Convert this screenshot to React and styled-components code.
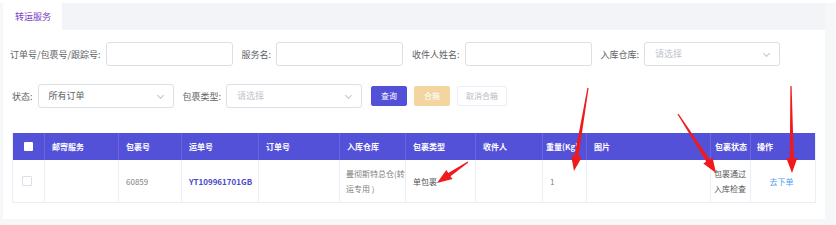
import React from "react"
import styled, { createGlobalStyle } from "styled-components"

const GlobalStyle = createGlobalStyle`
  html, body {
    margin: 0;
    padding: 0;
    background: #f6f7f9;
    font-family: "Noto Sans CJK SC", "Noto Sans", sans-serif;
  }
`

const columns = [
  { key: "check", title: "", width: 31 },
  { key: "service", title: "邮寄服务", width: 74 },
  { key: "pkg", title: "包裹号", width: 63 },
  { key: "waybill", title: "运单号", width: 77 },
  { key: "order", title: "订单号", width: 81 },
  { key: "warehouse", title: "入库仓库", width: 66 },
  { key: "type", title: "包裹类型", width: 70 },
  { key: "receiver", title: "收件人", width: 67 },
  { key: "weight", title: "重量(Kg)", width: 44, pad: 3 },
  { key: "photo", title: "图片", width: 124 },
  { key: "status", title: "包裹状态", width: 40, pad: 4 },
  { key: "action", title: "操作", width: 65, pad: 6 },
]

const gridTemplate = columns.map(c => c.width + "px").join(" ")

// red annotation arrows drawn on top of the screenshot
const arrows = [
  { x1: 468, y1: 162, x2: 437, y2: 183 },
  { x1: 588, y1: 88, x2: 574, y2: 171 },
  { x1: 678, y1: 114, x2: 716, y2: 173 },
  { x1: 791, y1: 86, x2: 792, y2: 173 },
]

const arrowPoints = ({ x1, y1, x2, y2 }) => {
  const dx = x2 - x1, dy = y2 - y1
  const len = Math.sqrt(dx * dx + dy * dy)
  const ux = dx / len, uy = dy / len
  const nx = -uy, ny = ux
  const head = 15, hw = 5.5, sw0 = 0.6, sw1 = 2
  const bx = x2 - ux * head, by = y2 - uy * head
  const p = (x, y) => `${x.toFixed(1)},${y.toFixed(1)}`
  return [
    p(x1 + nx * sw0, y1 + ny * sw0),
    p(bx + nx * sw1, by + ny * sw1),
    p(bx + nx * hw, by + ny * hw),
    p(x2, y2),
    p(bx - nx * hw, by - ny * hw),
    p(bx - nx * sw1, by - ny * sw1),
    p(x1 - nx * sw0, y1 - ny * sw0),
  ].join(" ")
}

const App = () => {
  return (
    <>
      <GlobalStyle />
      <Page>
        <TabBar>
          <Tab>转运服务</Tab>
        </TabBar>
        <Panel>
          <FormRow>
            <Label>订单号/包裹号/跟踪号:</Label>
            <Input />
            <Label>服务名:</Label>
            <Input />
            <Label>收件人姓名:</Label>
            <Input />
            <Label>入库仓库:</Label>
            <Select placeholder>请选择<Chevron /></Select>
          </FormRow>
          <FormRow>
            <Label $left={2}>状态:</Label>
            <Select>所有订单<Chevron /></Select>
            <Label>包裹类型:</Label>
            <Select placeholder>请选择<Chevron /></Select>
            <Buttons>
              <Button $kind="primary">查询</Button>
              <Button $kind="warning">合箱</Button>
              <Button $kind="plain">取消合箱</Button>
            </Buttons>
          </FormRow>

          <Table>
            <HeadRow>
              {columns.map(c => (
                <HeadCell key={c.key} $pad={c.pad}>
                  {c.key === "check" ? <HeadCheck /> : c.title}
                </HeadCell>
              ))}
            </HeadRow>
            <BodyRow>
              <Cell $center><BodyCheck /></Cell>
              <Cell />
              <Cell>60859</Cell>
              <Cell><Waybill>YT109961701GB</Waybill></Cell>
              <Cell />
              <Cell $pad={6} $right={0} $breakAll>曼彻斯特总仓(转运专用 )</Cell>
              <Cell $dark>单包裹</Cell>
              <Cell />
              <Cell $pad={7}>1</Cell>
              <Cell />
              <Cell $pad={3} $dark>包裹通过入库检查</Cell>
              <Cell $center><Link>去下单</Link></Cell>
            </BodyRow>
          </Table>
        </Panel>

        <Overlay width="836" height="225" viewBox="0 0 836 225">
          {arrows.map((a, i) => (
            <polygon key={i} points={arrowPoints(a)} fill="#f0191b" />
          ))}
        </Overlay>
      </Page>
    </>
  )
}

export default App

//-----------------------------------------------STYLES-----------------------------------------------//

const Page = styled.div`
    position: relative;
    width: 836px;
    height: 225px;
    border-top: 3px solid #ffffff;
    box-sizing: border-box;
    padding-left: 3px;
    overflow: hidden;
`
const TabBar = styled.div`
    width: 822px;
    height: 27px;
    background: #f3f4f7;
    display: flex;
`
const Tab = styled.div`
    width: 59px;
    height: 27px;
    background: #ffffff;
    color: #7a3cc4;
    font-size: 9px;
    line-height: 27px;
    padding-left: 12px;
    box-sizing: border-box;
`
const Panel = styled.div`
    width: 822px;
    height: 189px;
    background: #ffffff;
    box-sizing: border-box;
    padding: 12px 0 0 7px;
    display: flex;
    flex-direction: column;
`
const FormRow = styled.div`
    display: flex;
    align-items: center;
    height: 24px;
    margin-bottom: 18px;
`
const Label = styled.span`
    font-size: 9px;
    color: #606266;
    margin-left: ${props => props.$left || 0}px;
    margin-right: 5px;
    white-space: nowrap;
`
const Input = styled.div`
    width: 127px;
    height: 24px;
    box-sizing: border-box;
    border: 1px solid #dcdfe6;
    border-radius: 3px;
    margin-right: 9px;
`
const Select = styled.div`
    position: relative;
    width: 136px;
    height: 24px;
    box-sizing: border-box;
    border: 1px solid #dcdfe6;
    border-radius: 3px;
    margin-right: 9px;
    padding-left: 10px;
    font-size: 9px;
    line-height: 22px;
    color: ${props => props.placeholder ? "#c0c4cc" : "#606266"};
`
const Chevron = styled.span`
    position: absolute;
    right: 10px;
    top: 8px;
    width: 4px;
    height: 4px;
    border-right: 1px solid #c0c4cc;
    border-bottom: 1px solid #c0c4cc;
    transform: rotate(45deg);
`
const Buttons = styled.div`
    display: flex;
    gap: 7px;
`
const Button = styled.div`
    height: 20px;
    box-sizing: border-box;
    padding: 0 ${props => props.$kind === "plain" ? 8 : 9}px;
    border-radius: 2px;
    font-size: 8px;
    line-height: 18px;
    border: 1px solid ${props => props.$kind === "primary" ? "#5350d8" :
                         props.$kind === "warning" ? "#f2d59f" : "#ebeef5"};
    background: ${props => props.$kind === "primary" ? "#5350d8" :
                   props.$kind === "warning" ? "#f2d59f" : "#ffffff"};
    color: ${props => props.$kind === "plain" ? "#b8bcc4" : "#ffffff"};
`
const Table = styled.div`
    width: 802px;
    margin-top: 7px;
    margin-left: 2px;
    border-left: 1px solid #ebeef5;
    border-right: 1px solid #ebeef5;
    border-bottom: 1px solid #ebeef5;
    font-size: 8px;
`
const HeadRow = styled.div`
    display: grid;
    grid-template-columns: ${gridTemplate};
    height: 27px;
    background: #5451d9;
`
const HeadCell = styled.div`
    display: flex;
    align-items: center;
    padding-left: ${props => props.$pad || 7}px;
    color: #ffffff;
    font-weight: bold;
    border-left: 1px solid #6866e0;
    white-space: nowrap;
    &:first-child {
        border-left: none;
        justify-content: center;
        padding-left: 0;
    }
`
const HeadCheck = styled.span`
    width: 9px;
    height: 9px;
    background: #ffffff;
    border-radius: 1px;
`
const BodyRow = styled.div`
    display: grid;
    grid-template-columns: ${gridTemplate};
    height: 42px;
`
const Cell = styled.div`
    display: flex;
    align-items: center;
    justify-content: ${props => props.$center ? "center" : "flex-start"};
    padding: 0 ${props => props.$right ?? 3}px 0 ${props => props.$center ? 0 : (props.$pad || 7)}px;
    color: ${props => props.$dark ? "#555" : "#808080"};
    line-height: 15px;
    word-break: ${props => props.$breakAll ? "break-all" : "normal"};
    line-break: ${props => props.$breakAll ? "anywhere" : "auto"};
    border-left: 1px solid #ebeef5;
    &:first-child {
        border-left: none;
    }
`
const BodyCheck = styled.span`
    width: 8px;
    height: 8px;
    border: 1px solid #dcdfe6;
    border-radius: 1px;
`
const Waybill = styled.span`
    color: #4b48cc;
    font-weight: bold;
`
const Link = styled.span`
    color: #4d9cf5;
`
const Overlay = styled.svg`
    position: absolute;
    left: 0;
    top: -3px;
    pointer-events: none;
`
